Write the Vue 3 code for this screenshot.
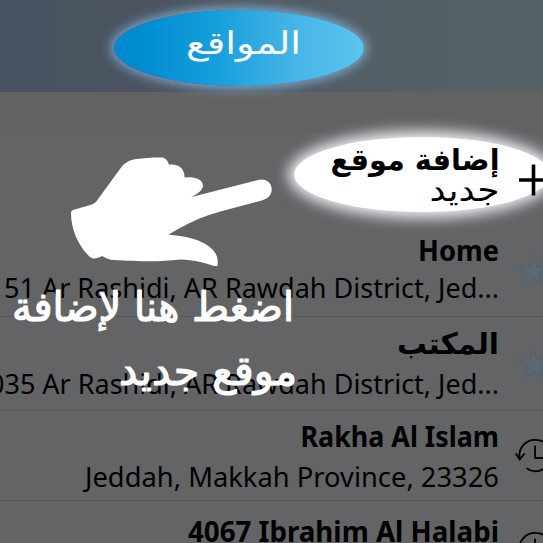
<script setup>
const places = [
  { name: 'Home', w: 81, ny: 40, detail: '51 Ar Rashidi, AR Rawdah District, Jed...', dw: 495, dy: 77, h: 96, icon: 'star', iy: 49.5 },
  { name: 'المكتب', w: 102, ny: 36.5, ar: true, detail: '035 Ar Rashidi, AR Rawdah District, Jed...', dw: 510, dy: 76.7, h: 94, icon: 'star', iy: 47 },
  { name: 'Rakha Al Islam', w: 198.5, ny: 35.5, detail: 'Jeddah, Makkah Province, 23326', dw: 414, dy: 75.5, h: 90, icon: 'recent', iy: 44 },
  { name: '4067 Ibrahim Al Halabi', w: 311, ny: 40.5, detail: '', dw: 0, dy: 80, h: 42, icon: 'recent', iy: 47 }
]
</script>

<template>
  <main class="screen">
    <header class="header">
      <div class="title-glow"></div>
      <svg class="title" width="543" height="92">
        <text class="arabic" x="301" y="54" text-anchor="end" textLength="115" lengthAdjust="spacingAndGlyphs">المواقع</text>
      </svg>
    </header>
    <div class="strip"></div>
    <section class="add">
      <div class="add-glow"></div>
      <svg class="add-text" width="543" height="87">
        <text class="arabic bold" x="499.5" y="35.5" text-anchor="end" textLength="169" lengthAdjust="spacingAndGlyphs">إضافة موقع</text>
        <text class="arabic" x="499.5" y="66.5" text-anchor="end" textLength="70" lengthAdjust="spacingAndGlyphs">جديد</text>
        <path d="M519 46h28M533.5 30.5v31" stroke="#000" stroke-width="3.6" />
      </svg>
    </section>
    <section v-for="p in places" :key="p.name" class="row">
      <svg width="499" :height="p.h">
        <text :class="p.ar ? 'arabic bold' : 'name'" x="499" :y="p.ny" text-anchor="end" :textLength="p.w" lengthAdjust="spacingAndGlyphs">{{ p.name }}</text>
        <text v-if="p.detail" class="detail" x="499" :y="p.dy" text-anchor="end" :textLength="p.dw" lengthAdjust="spacingAndGlyphs">{{ p.detail }}</text>
      </svg>
      <svg class="icon" width="44" :height="p.h">
        <g :transform="`translate(34.5 ${p.iy})`">
          <path v-if="p.icon === 'star'" d="M0-14.5 3.6-4.3H15L6 3 9.6 14 0 7.3-9.6 14-6 3-15-4.300H-3.600Z" fill="#5e6872" stroke="#56646e" stroke-width="2" />
          <g v-else fill="none" stroke="#000" stroke-width="1.8">
            <path d="M-13.8 3A15.5 15.5 0 0 1 1.500-15.200M1.500-15.200A15.700 15.700 0 1 1-7 13.300M-17.700-1.500-13.800 4.500-8.800-1.500M1.500-9.500V3H10" />
          </g>
        </g>
      </svg>
    </section>
    <svg class="guide" width="543" height="543">
      <path d="M71 213Q71 210.500 73 210L92 204.500C96 203 98 199 101 195L120 169C124 163 129 160 136 159L153 157.500H162C166 158 168 161 169 164.800 176 163.500 185 167 184.500 177.500 192 176.500 203 178 203 186 202 191 197 194 191.500 197L257 180.200C266 177.500 272 183 271.700 189.500 271.500 196 267 199 260 201L226 210C199 217 187 224 168.500 234.700 183 235.500 202 239 212 249 217 254 218.500 259 217.500 266L214 266C201 262 195 260 180 259.500 163 261.500 146 262 114 260 109 260 106 258 102 256 98 258 94 260 90 257 79 247 71 230 71 213Z" fill="#fff" />
      <text class="note" x="294" y="320.500" text-anchor="end" textLength="282" lengthAdjust="spacingAndGlyphs">اضغط هنا لإضافة</text>
      <text class="note" x="297" y="385" text-anchor="end" textLength="178" lengthAdjust="spacingAndGlyphs">موقع جديد</text>
    </svg>
  </main>
</template>

<style>
body { margin: 0; background: #636466; }
</style>
<style scoped>
.screen { position: relative; width: 543px; height: 543px; overflow: hidden; background: #636466; }
svg { display: block; flex: none; }
.header { position: relative; height: 92px; background: linear-gradient(90deg, #485260, #4c5460 30%, #535f66 68%, #566265); }
.title-glow, .add-glow { position: absolute; border-radius: 50%; }
.title-glow { left: 114px; top: 10px; width: 250px; height: 76px; background: linear-gradient(90deg, #008bd0 10%, #159edb 40%, #48b5e6 73%, #5bc4ef); box-shadow: 0 0 11px 3px #7fa6c8; }
.title, .add-text { position: relative; }
.title { fill: #fff; }
.strip { height: 42px; background: #626263; }
.add { position: relative; height: 87px; }
.add-glow { left: 294px; top: 3px; width: 256px; height: 75px; background: #fff; box-shadow: 0 0 14px 6px #eeeef3; }
.row { position: relative; display: flex; box-sizing: border-box; }
.row + .row { box-shadow: 0 -1px 0 #58595c; }
.arabic { font-family: "DejaVu Sans", sans-serif; font-size: 31.5px; }
.bold { font-weight: 700; font-size: 29.5px; }
.name { font: 700 28px "Noto Sans", sans-serif; }
.detail { font: 400 28px "Noto Sans", sans-serif; }
.guide { position: absolute; left: 0; top: 0; }
.note { font: 400 41px "DejaVu Sans", sans-serif; fill: #fff; stroke: #fff; stroke-width: 1.2px; stroke-linejoin: round; }
</style>
